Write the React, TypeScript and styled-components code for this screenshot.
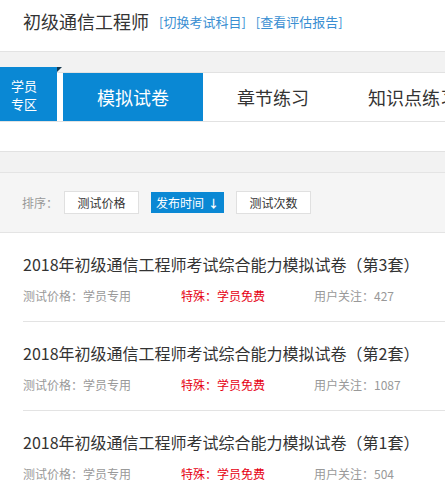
import styled, { createGlobalStyle } from 'styled-components';

const GlobalStyle = createGlobalStyle`
  html, body{
    margin: 0;
    padding: 0;
    background: #fff;
    overflow: hidden;
  }
  body{
    font-family: "Noto Sans CJK SC", "Liberation Sans", sans-serif;
    color: #333;
  }
  *{
    box-sizing: border-box;
  }
`;

const papers = [
  { no: 3, follow: 427 },
  { no: 2, follow: 1087 },
  { no: 1, follow: 504 },
];

const App = () => {
  return (
    <Styled.Page>
      <GlobalStyle />
      <Styled.Header>
        <h1>初级通信工程师</h1>
        <a>[切换考试科目]</a>
        <a>[查看评估报告]</a>
      </Styled.Header>

      <Styled.NavRow>
        <Styled.Badge>
          <span>学员</span>
          <span>专区</span>
        </Styled.Badge>
        <Styled.Tabs>
          <Styled.Tab $active>模拟试卷</Styled.Tab>
          <Styled.Tab>章节练习</Styled.Tab>
          <Styled.Tab>知识点练习</Styled.Tab>
        </Styled.Tabs>
      </Styled.NavRow>

      <Styled.Spacer />
      <Styled.GrayBand />

      <Styled.SortBar>
        <span>排序：</span>
        <Styled.SortButton>测试价格</Styled.SortButton>
        <Styled.SortButton $active>发布时间 <i>↓</i></Styled.SortButton>
        <Styled.SortButton>测试次数</Styled.SortButton>
      </Styled.SortBar>

      <Styled.List>
        {papers.map((p) => (
          <Styled.Item key={p.no}>
            <h3>2018年初级通信工程师考试综合能力模拟试卷（第{p.no}套）</h3>
            <Styled.Meta>
              <span>测试价格：学员专用</span>
              <span className='red'>特殊：学员免费</span>
              <span>用户关注：{p.follow}</span>
            </Styled.Meta>
          </Styled.Item>
        ))}
      </Styled.List>
    </Styled.Page>
  )
}

export default App;

const Styled = {
  Page: styled.div`
    width: 445px;
    min-height: 493px;
    background: #fff;
  `,
  Header: styled.div`
    height: 52px;
    padding: 0 0 10px 23px;
    display: flex;
    align-items: center;
    gap: 10px;
    background: #fff;
    border-bottom: 1px solid #e3e3e3;

    h1{
      margin: 0;
      font-size: 18px;
      font-weight: normal;
      color: #333;
    }
    a{
      font-size: 13px;
      color: #3b8fd2;
      cursor: pointer;
      margin-top: 1px;
    }
  `,
  NavRow: styled.div`
    display: flex;
    align-items: flex-end;
    background: #f2f2f2;
    padding-top: 15px;
  `,
  Badge: styled.div`
    position: relative;
    width: 57px;
    height: 54px;
    padding: 2px 0 0 11px;
    display: flex;
    flex-direction: column;
    justify-content: center;
    background: #0a88d4;
    color: #fff;
    font-size: 13px;
    line-height: 18px;

    &::after{
      content: '';
      position: absolute;
      top: 0;
      right: -5px;
      border-style: solid;
      border-width: 0 0 5px 5px;
      border-color: transparent transparent transparent #163a52;
    }
  `,
  Tabs: styled.div`
    flex: 1;
    height: 49px;
    display: flex;
    padding-left: 6px;
    background: #fff;
    border-top: 1px solid #e2e2e2;
    overflow: hidden;
  `,
  Tab: styled.div<{ $active?: boolean }>`
    flex: 0 0 140px;
    height: 48px;
    display: flex;
    align-items: center;
    justify-content: center;
    font-size: 18px;
    white-space: nowrap;
    color: ${(p) => (p.$active ? '#fff' : '#333')};
    background: ${(p) => (p.$active ? '#0a88d4' : 'transparent')};
  `,
  Spacer: styled.div`
    height: 31px;
    background: #fff;
    border-top: 1px solid #e2e2e2;
    border-bottom: 1px solid #e2e2e2;
  `,
  GrayBand: styled.div`
    height: 21px;
    background: #f2f2f2;
    border-bottom: 1px solid #e4e4e4;
  `,
  SortBar: styled.div`
    height: 60px;
    padding-left: 22px;
    display: flex;
    align-items: center;
    background: #f5f5f5;
    border-bottom: 1px solid #e4e4e4;
    font-size: 12px;

    > span{
      color: #999;
      margin-right: 6px;
    }
  `,
  SortButton: styled.div<{ $active?: boolean }>`
    width: ${(p) => (p.$active ? '73px' : '75px')};
    height: ${(p) => (p.$active ? '21px' : '23px')};
    margin-right: 12px;
    display: flex;
    align-items: center;
    justify-content: center;
    font-size: 12px;
    color: ${(p) => (p.$active ? '#fff' : '#333')};
    background: ${(p) => (p.$active ? '#0a88d4' : '#fff')};
    border: ${(p) => (p.$active ? 'none' : '1px solid #e0e0e0')};

    i{
      font-style: normal;
      font-weight: bold;
      margin-left: 4px;
      font-size: 11px;
    }
  `,
  List: styled.ul`
    margin: 0;
    padding: 0;
    list-style: none;
  `,
  Item: styled.li`
    margin-left: 23px;
    padding: 19px 0 15px;
    border-bottom: 1px solid #e3e3e3;

    h3{
      margin: 0;
      font-size: 16px;
      line-height: 24px;
      font-weight: normal;
      color: #333;
      white-space: nowrap;
    }
  `,
  Meta: styled.p`
    margin: 10px 0 0;
    display: grid;
    grid-template-columns: 158px 133px auto;
    font-size: 12px;
    line-height: 20px;
    color: #999;

    .red{
      color: #e60012;
    }
  `,
}
